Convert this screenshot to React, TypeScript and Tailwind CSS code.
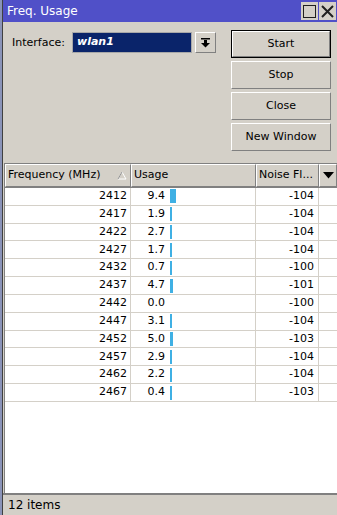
import React from 'react'

const rows: [number, number, number][] = [
  [2412, 9.4, -104],
  [2417, 1.9, -104],
  [2422, 2.7, -104],
  [2427, 1.7, -104],
  [2432, 0.7, -100],
  [2437, 4.7, -101],
  [2442, 0.0, -100],
  [2447, 3.1, -104],
  [2452, 5.0, -103],
  [2457, 2.9, -104],
  [2462, 2.2, -104],
  [2467, 0.4, -103],
]

const raised = 'border border-t-white border-l-white border-r-[#808080] border-b-[#808080]'

function Button({ label, focused }: { label: string; focused?: boolean }) {
  return (
    <div className={`h-[28px] w-[100px] ${focused ? 'border border-black' : ''}`}>
      <div className={`h-full w-full flex items-center justify-center bg-[#d4d0c8] ${raised}`}>
        {label}
      </div>
    </div>
  )
}

export default function App() {
  return (
    <div
      className="w-[337px] h-[515px] flex overflow-hidden bg-[#d4d0c8] text-[11px] text-black"
      style={{ fontFamily: '"DejaVu Sans", Verdana, sans-serif' }}
    >
      {/* desktop strip + window edge */}
      <div className="w-[2px] shrink-0 bg-[#8a93b8]" />
      <div className="flex-1 flex flex-col border-l border-[#404040]">
        {/* Title bar */}
        <div className="h-[22px] shrink-0 bg-[#5050c8] flex items-center justify-between pl-[4px] pr-[1px]">
          <span className="text-white text-[12px]">Freq. Usage</span>
          <div className="flex gap-[1px]">
            <div className="w-[17px] h-[18px] bg-[#d4d0c8] flex items-center justify-center">
              <div className="w-[13px] h-[13px] border-[1.5px] border-[#202020]" />
            </div>
            <div className="w-[17px] h-[18px] bg-[#d4d0c8] flex items-center justify-center">
              <svg width="13" height="13" viewBox="0 0 13 13">
                <path d="M1 1 L12 12 M12 1 L1 12" stroke="#202020" strokeWidth="2" />
              </svg>
            </div>
          </div>
        </div>

        {/* Top panel */}
        <div className="h-[141px] shrink-0 flex pl-[9px] pt-[8px]">
          <div className="flex items-start pt-[2px]">
            <span className="mt-[3px] w-[60px]">Interface:</span>
            <div className="w-[120px] h-[21px] border border-[#a8a8a8] bg-[#0a246a] flex items-center pl-[4px]">
              <span className="text-white italic font-bold text-[11px]">wlan1</span>
            </div>
            <div className={`ml-[3px] w-[21px] h-[21px] bg-[#d4d0c8] flex items-center justify-center ${raised}`}>
              <svg width="9" height="10" viewBox="0 0 9 10">
                <rect x="0" y="0" width="9" height="1.5" fill="#000" />
                <rect x="3" y="2" width="3" height="3" fill="#000" />
                <path d="M0 5 L9 5 L4.5 9.5 Z" fill="#000" />
              </svg>
            </div>
          </div>
          <div className="ml-[15px] flex flex-col gap-[3px]">
            <Button label="Start" focused />
            <Button label="Stop" />
            <Button label="Close" />
            <Button label="New Window" />
          </div>
        </div>

        {/* Table */}
        <div className="flex-1 flex flex-col border-t border-[#808080] ml-[1px] border-l border-l-[#808080] bg-white">
          <div className="h-[24px] shrink-0 flex bg-[#d4d0c8] border-b border-[#808080]">
            <div className={`w-[126px] flex items-center justify-between pl-[2px] pr-[3px] ${raised}`}>
              <span>Frequency (MHz)</span>
              <svg width="10" height="9" viewBox="0 0 10 9">
                <path d="M5 1 L9 8 L1 8 Z" fill="none" stroke="#ffffff" strokeWidth="1" />
                <path d="M5 1 L1 8" stroke="#909090" strokeWidth="1" />
              </svg>
            </div>
            <div className={`w-[125px] flex items-center pl-[2px] ${raised}`}>Usage</div>
            <div className={`w-[63px] flex items-center pl-[2px] ${raised}`}>Noise Fl...</div>
            <div className={`flex-1 flex items-center justify-center ${raised}`}>
              <svg width="11" height="7" viewBox="0 0 11 7">
                <path d="M0 0 L11 0 L5.5 6.5 Z" fill="#000" />
              </svg>
            </div>
          </div>
          <div className="flex-1 bg-white">
            {rows.map(([freq, usage, noise]) => {
              const barW = usage === 0 ? 0 : Math.max(2, Math.round(usage * 0.62))
              return (
                <div key={freq} className="h-[17.83px] flex border-b border-[#d4d0c8]">
                  <div className="w-[126px] flex items-center justify-end pr-[3px] border-r border-[#d4d0c8]">
                    {freq}
                  </div>
                  <div className="w-[125px] flex items-center border-r border-[#d4d0c8]">
                    <span className="w-[34px] text-right">{usage.toFixed(1)}</span>
                    <div className="ml-[5px] h-[14px] bg-[#3fb0e4]" style={{ width: barW }} />
                  </div>
                  <div className="w-[63px] flex items-center justify-end pr-[4px] border-r border-[#d4d0c8]">
                    {noise}
                  </div>
                  <div className="flex-1" />
                </div>
              )
            })}
          </div>
        </div>

        {/* Status bar */}
        <div className="h-[22px] shrink-0 border-t-2 border-[#808080] flex items-center pl-[5px] text-[12px]">
          12 items
        </div>
      </div>
    </div>
  )
}
